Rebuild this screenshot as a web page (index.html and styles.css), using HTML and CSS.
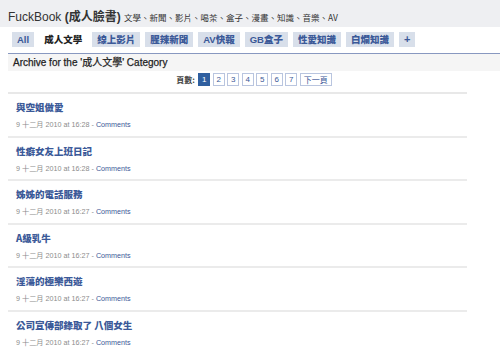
FILE: index.html
```html
<!DOCTYPE html>
<html lang="zh-Hant">
<head>
<meta charset="utf-8">
<title>FuckBook (成人臉書)</title>
<link rel="stylesheet" href="styles.css">
</head>
<body>
<header class="top">
  <h1 class="brand">FuckBook <span class="brand-cjk">(成人臉書)</span> <span class="tagline">文學、新聞、影片、喝茶、盒子、漫畫、知識、音樂、AV</span></h1>
</header>
<nav class="tabs">
  <a class="tab" href="#">All</a>
  <a class="tab tab-active" href="#">成人文學</a>
  <a class="tab" href="#">線上影片</a>
  <a class="tab" href="#">腥辣新聞</a>
  <a class="tab" href="#">AV快報</a>
  <a class="tab" href="#">GB盒子</a>
  <a class="tab" href="#">性愛知識</a>
  <a class="tab" href="#">白爛知識</a>
  <a class="tab tab-plus" href="#">+</a>
</nav>
<main class="content">
  <h2 class="archive">Archive for the '成人文學' Category</h2>
  <div class="pager">
    <span class="pager-label">頁數:</span>
    <a class="page page-current" href="#">1</a>
    <a class="page" href="#">2</a>
    <a class="page" href="#">3</a>
    <a class="page" href="#">4</a>
    <a class="page" href="#">5</a>
    <a class="page" href="#">6</a>
    <a class="page" href="#">7</a>
    <a class="page page-next" href="#">下一頁</a>
  </div>
  <div class="posts">
    <article class="post">
      <h3 class="post-title"><a href="#">與空姐做愛</a></h3>
      <p class="post-meta">9 十二月 2010 at 16:28 - <a href="#">Comments</a></p>
    </article>
    <article class="post">
      <h3 class="post-title"><a href="#">性癖女友上班日記</a></h3>
      <p class="post-meta">9 十二月 2010 at 16:28 - <a href="#">Comments</a></p>
    </article>
    <article class="post">
      <h3 class="post-title"><a href="#">姊姊的電話服務</a></h3>
      <p class="post-meta">9 十二月 2010 at 16:27 - <a href="#">Comments</a></p>
    </article>
    <article class="post">
      <h3 class="post-title"><a href="#">A級乳牛</a></h3>
      <p class="post-meta">9 十二月 2010 at 16:27 - <a href="#">Comments</a></p>
    </article>
    <article class="post">
      <h3 class="post-title"><a href="#">淫蕩的極樂西遊</a></h3>
      <p class="post-meta">9 十二月 2010 at 16:27 - <a href="#">Comments</a></p>
    </article>
    <article class="post">
      <h3 class="post-title"><a href="#">公司宣傳部錄取了 八個女生</a></h3>
      <p class="post-meta">9 十二月 2010 at 16:27 - <a href="#">Comments</a></p>
    </article>
  </div>
</main>
</body>
</html>
```
FILE: styles.css
```css
* { box-sizing: border-box; }
html, body { margin: 0; padding: 0; background: #fff; }
body {
  font-family: "Liberation Sans", "Noto Sans CJK TC", sans-serif;
  color: #333;
  overflow: hidden;
}
a { text-decoration: none; }

.top {
  height: 27px;
  background: #eeeff2;
  padding: 10px 0 0 8px;
}
.brand {
  margin: 0;
  font-size: 12px;
  line-height: 14px;
  font-weight: normal;
  color: #333;
  white-space: nowrap;
}
.brand-cjk { font-weight: bold; }
.tagline {
  font-size: 8.5px;
  font-family: "Noto Sans CJK TC", sans-serif;
  color: #333;
}

.tabs {
  display: flex;
  gap: 5px;
  height: 27px;
  padding: 5px 0 0 4px;
  margin-left: 8px;
  border-bottom: 1px solid #8898c0;
}
.tab {
  height: 15px;
  line-height: 15px;
  padding: 0 5px;
  background: #d8dfea;
  color: #3b5998;
  font-weight: 900;
  font-size: 9.5px;
  font-family: "Liberation Sans", "Noto Sans CJK TC", sans-serif;
}
.tab-active { background: #fff; color: #222; }
.tab-plus { font-size: 11px; }

.content { margin-left: 8px; }
.archive {
  margin: 0;
  height: 17px;
  padding: 3px 0 0 5px;
  background: #f5f5f5;
  font-size: 10px;
  line-height: 12px;
  font-weight: normal;
  color: #222;
  -webkit-text-stroke: 0.25px #222;
}
.pager {
  display: flex;
  justify-content: center;
  align-items: center;
  gap: 2.5px;
  box-sizing: content-box;
  width: 426px;
  height: 15px;
  padding: 1px 0 5px 33px;
  border-bottom: 2px solid #e8e8e8;
  font-size: 8px;
}
.pager-label {
  font-weight: bold;
  color: #444;
  margin-right: 1px;
  font-family: "Noto Sans CJK TC", sans-serif;
}
.page {
  display: inline-block;
  min-width: 12px;
  height: 13px;
  line-height: 11px;
  padding: 0 2px;
  border: 1px solid #b9c5df;
  color: #3b5998;
  text-align: center;
  font-size: 8px;
}
.page-current { background: #2f5f9f; border-color: #2f5f9f; color: #fff; }
.page-next { padding: 0 3px; font-family: "Noto Sans CJK TC", sans-serif; }

.posts { width: 459px; }
.post {
  height: 43.5px;
  padding: 7px 0 0 8px;
  border-bottom: 2px solid #ebebeb;
}
.post-title {
  margin: 0;
  font-size: 9.5px;
  line-height: 12px;
  font-weight: 900;
  font-family: "Noto Sans CJK TC", sans-serif;
}
.post-title a { color: #3b5998; }
.post-meta {
  margin: 7px 0 0;
  font-size: 7.2px;
  line-height: 10px;
  color: #8c8c8c;
  font-family: "Liberation Sans", "Noto Sans CJK TC", sans-serif;
}
.post-meta a { color: #3b5998; }
```
